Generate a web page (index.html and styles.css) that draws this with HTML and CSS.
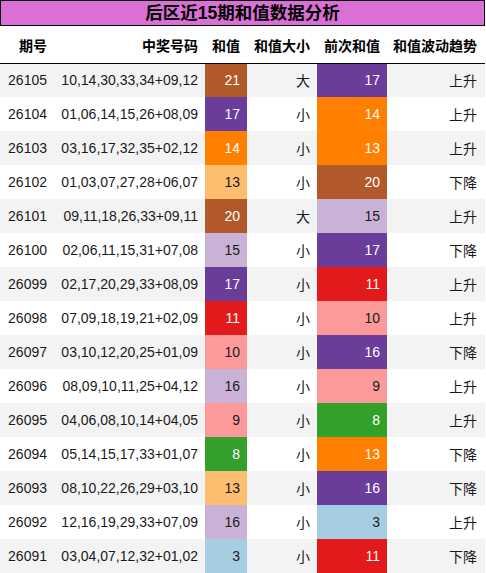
FILE: index.html
```html
<html lang="zh-CN"><head>
    <meta charset="UTF-8">
    <meta name="viewport" content="width=device-width, initial-scale=1.0">
    <title>后区近15期和值数据分析</title>
    <link rel="stylesheet" href="styles.css">
</head>
<body>
    <div class="title">后区近15期和值数据分析</div>
    <table class="grid">
        <colgroup>
            <col class="c_qi"><col class="c_hm"><col class="c_hz"><col class="c_dx"><col class="c_qc"><col class="c_qs">
        </colgroup>
        <thead>
            <tr class="hd"><th>期号</th><th>中奖号码</th><th>和值</th><th>和值大小</th><th>前次和值</th><th>和值波动趋势</th></tr>
        </thead>
        <tbody>
            <tr><td>26105</td><td>10,14,30,33,34+09,12</td><td class="cl_brown">21</td><td>大</td><td class="cl_purple">17</td><td>上升</td></tr>
            <tr><td>26104</td><td>01,06,14,15,26+08,09</td><td class="cl_purple">17</td><td>小</td><td class="cl_orange">14</td><td>上升</td></tr>
            <tr><td>26103</td><td>03,16,17,32,35+02,12</td><td class="cl_orange">14</td><td>小</td><td class="cl_orange">13</td><td>上升</td></tr>
            <tr><td>26102</td><td>01,03,07,27,28+06,07</td><td class="cl_lorange">13</td><td>小</td><td class="cl_brown">20</td><td>下降</td></tr>
            <tr><td>26101</td><td>09,11,18,26,33+09,11</td><td class="cl_brown">20</td><td>大</td><td class="cl_lpurple">15</td><td>上升</td></tr>
            <tr><td>26100</td><td>02,06,11,15,31+07,08</td><td class="cl_lpurple">15</td><td>小</td><td class="cl_purple">17</td><td>下降</td></tr>
            <tr><td>26099</td><td>02,17,20,29,33+08,09</td><td class="cl_purple">17</td><td>小</td><td class="cl_red">11</td><td>上升</td></tr>
            <tr><td>26098</td><td>07,09,18,19,21+02,09</td><td class="cl_red">11</td><td>小</td><td class="cl_pink">10</td><td>上升</td></tr>
            <tr><td>26097</td><td>03,10,12,20,25+01,09</td><td class="cl_pink">10</td><td>小</td><td class="cl_purple">16</td><td>下降</td></tr>
            <tr><td>26096</td><td>08,09,10,11,25+04,12</td><td class="cl_lpurple">16</td><td>小</td><td class="cl_pink">9</td><td>上升</td></tr>
            <tr><td>26095</td><td>04,06,08,10,14+04,05</td><td class="cl_pink">9</td><td>小</td><td class="cl_green">8</td><td>上升</td></tr>
            <tr><td>26094</td><td>05,14,15,17,33+01,07</td><td class="cl_green">8</td><td>小</td><td class="cl_orange">13</td><td>下降</td></tr>
            <tr><td>26093</td><td>08,10,22,26,29+03,10</td><td class="cl_lorange">13</td><td>小</td><td class="cl_purple">16</td><td>下降</td></tr>
            <tr><td>26092</td><td>12,16,19,29,33+07,09</td><td class="cl_lpurple">16</td><td>小</td><td class="cl_lblue">3</td><td>上升</td></tr>
            <tr><td>26091</td><td>03,04,07,12,32+01,02</td><td class="cl_lblue">3</td><td>小</td><td class="cl_red">11</td><td>下降</td></tr>
        </tbody>
    </table>
</body></html>
```

FILE: styles.css
```css
/* 기본 */
body {
    margin: 0;
    background: #fff;
    font-family: "Liberation Sans", "Noto Sans CJK SC", sans-serif;
    color: #1a1a1a;
}
.title {
    width: 483px;
    height: 24px;
    border: 1px solid #000;
    background-color: #da70d6;
    text-align: center;
    font-size: 17.5px;
    font-weight: bold;
    line-height: 24px;
    color: #000;
}
.grid {
    width: 485px;
    border-collapse: collapse;
    table-layout: fixed;
    font-size: 14px;
}
.c_qi { width: 54px; }
.c_hm { width: 151px; }
.c_hz { width: 42px; }
.c_dx { width: 70px; }
.c_qc { width: 70px; }
.c_qs { width: 98px; }

.grid .hd { height: 37px; }
.grid th {
    padding: 1px 7px 0 0;
    text-align: right;
    font-weight: bold;
    color: #000;
    border-bottom: 1px solid #000;
}
.grid td {
    height: 34px;
    padding: 0 7px 0 0;
    text-align: right;
    white-space: nowrap;
}
.grid th:last-child,
.grid td:last-child { padding-right: 8px; }
.grid tbody tr:nth-child(odd) { background-color: #f3f3f3; }

/* 색상 (Paired) */
.cl_brown   { background-color: #b15928; color: #fff; }
.cl_purple  { background-color: #6a3d9a; color: #fff; }
.cl_orange  { background-color: #ff7f00; color: #fff; }
.cl_red     { background-color: #e31a1c; color: #fff; }
.cl_green   { background-color: #33a02c; color: #fff; }
.cl_lorange { background-color: #fdbf6f; }
.cl_lpurple { background-color: #cab2d6; }
.cl_pink    { background-color: #fb9a99; }
.cl_lblue   { background-color: #a6cee3; }
```
